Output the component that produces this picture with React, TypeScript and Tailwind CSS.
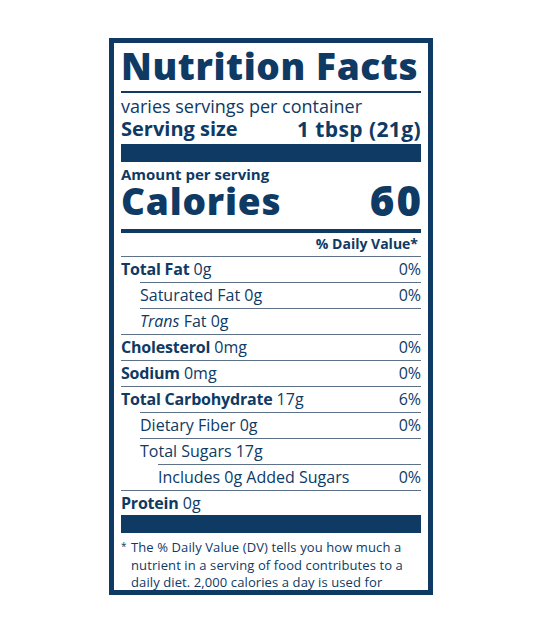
import React from "react"

type Row = {
    label: string
    amount?: string
    dv?: string
    bold?: boolean
    indent?: 0 | 1 | 2
    italic?: string
}

const rows: Row[] = [
    { label: "Total Fat", amount: "0g", dv: "0%", bold: true },
    { label: "Saturated Fat", amount: "0g", dv: "0%", indent: 1 },
    { label: "Fat", italic: "Trans", amount: "0g", indent: 1 },
    { label: "Cholesterol", amount: "0mg", dv: "0%", bold: true },
    { label: "Sodium", amount: "0mg", dv: "0%", bold: true },
    { label: "Total Carbohydrate", amount: "17g", dv: "6%", bold: true },
    { label: "Dietary Fiber", amount: "0g", dv: "0%", indent: 1 },
    { label: "Total Sugars", amount: "17g", indent: 1 },
    { label: "Includes 0g Added Sugars", dv: "0%", indent: 2 },
    { label: "Protein", amount: "0g", bold: true },
]

const indentClass = ["ml-0", "ml-[19px]", "ml-[37px]"]

const NutrientRow: React.FC<{ row: Row; last: boolean }> = ({ row, last }) => {
    return (
        <div className={`${indentClass[row.indent ?? 0]} border-t border-[#5d7189] flex justify-between items-center ${last ? "h-[25px]" : "h-[26px]"} text-[16px] leading-[25px]`}>
            <div>
                {row.italic && <span className="italic">{row.italic} </span>}
                <span className={row.bold ? "font-bold tracking-[-0.2px]" : ""}>{row.label}</span>
                {row.amount && <span> {row.amount}</span>}
            </div>
            {row.dv && <div>{row.dv}</div>}
        </div>
    )
}

export default function App() {
    return (
        <div className="w-[535px] h-[622px] bg-white pl-[109px] pt-[38px]" style={{ fontFamily: '"Open Sans", "Noto Sans", sans-serif' }}>
            <div className="w-[324px] h-[557px] border-[5px] border-[#0e3a64] px-[7px] overflow-hidden text-[#0e3a64]">
                {/* header */}
                <div className="pt-[5px] text-[37px] leading-[36px] font-extrabold tracking-[0.6px] whitespace-nowrap">Nutrition Facts</div>
                <div className="mt-[7px] h-[2px] bg-[#0e3a64]" />
                <div className="mt-[2px] text-[18px] leading-[22px]">varies servings per container</div>
                <div className="h-[24px] flex justify-between items-center text-[20px] leading-[24px] font-bold">
                    <span>Serving size</span>
                    <span className="text-[21px] tracking-[0.4px]">1 tbsp (21g)</span>
                </div>
                <div className="mt-[3px] h-[18px] bg-[#0e3a64]" />

                {/* calories */}
                <div className="mt-[3px] text-[15px] leading-[18px] font-bold">Amount per serving</div>
                <div className="h-[36px] flex justify-between items-end leading-[36px] font-extrabold">
                    <span className="text-[37px] tracking-[0.8px]">Calories</span>
                    <span className="text-[42px] leading-[38px] tracking-[2px] -mr-[2px]">60</span>
                </div>
                <div className="mt-[10px] h-[4px] bg-[#0e3a64]" />
                <div className="mt-[2px] text-right text-[14px] leading-[18px] font-bold pr-[3px]">% Daily Value*</div>

                {/* nutrients */}
                <div className="mt-[3px]">
                    {rows.map((row, i) => (
                        <NutrientRow key={i} row={row} last={i === rows.length - 1} />
                    ))}
                </div>
                <div className="h-[18px] bg-[#0e3a64]" />

                {/* footnote */}
                <div className="mt-[6px] flex text-[13px] leading-[17.5px] tracking-[0.1px]">
                    <span className="w-[10px] shrink-0 text-[10px] leading-[14px]">*</span>
                    <p>
                        The % Daily Value (DV) tells you how much a nutrient in a serving of food contributes to a daily diet. 2,000 calories a day is used for general nutrition advice.
                    </p>
                </div>
            </div>
        </div>
    )
}
